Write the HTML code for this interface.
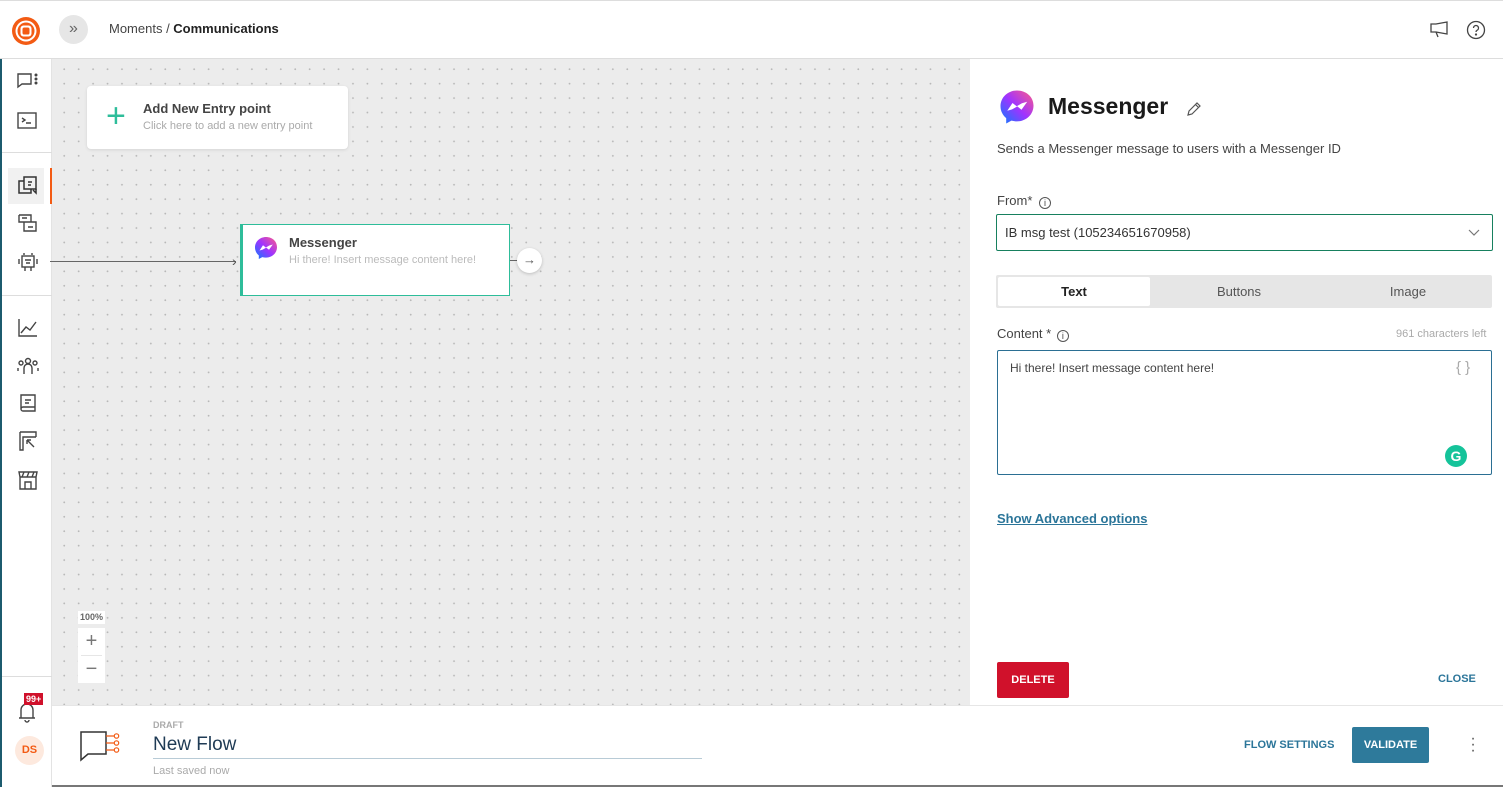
<!DOCTYPE html>
<html><head><meta charset="utf-8"><style>
*{box-sizing:border-box;margin:0;padding:0}
body{width:1503px;height:787px;overflow:hidden;font-family:"Liberation Sans",sans-serif;background:#fff;position:relative;color:#222}
.abs{position:absolute}
.top{left:0;top:0;width:1503px;height:59px;border-bottom:1px solid #ddd;border-top:1px solid #ddd;background:#fff}
.side{left:0;top:59px;width:52px;height:728px;border-left:2px solid #1c5b6e;border-right:1px solid #e3e3e3;background:#fff}
.canvas{left:52px;top:59px;width:918px;height:646px;background-color:#ececec;background-image:radial-gradient(circle,#b8b8b8 0.8px,transparent 1.1px);background-size:14.45px 14.45px;background-position:5px 3px}
.panel{left:970px;top:59px;width:533px;height:646px;background:#fff}
.bottom{left:52px;top:705px;width:1451px;height:82px;background:#fff;border-top:1px solid #e6e6e6;border-bottom:2px solid #777}
.ic{position:absolute;left:14px}
</style></head><body>
<div class="abs top">
 <svg class="abs" style="left:11px;top:15px" width="30" height="30" viewBox="0 0 30 30"><circle cx="15" cy="15" r="14" fill="#f35b14"/><circle cx="15" cy="15" r="10.5" fill="#fff"/><circle cx="15" cy="15" r="8.5" fill="#f35b14"/><rect x="9.5" y="9.5" width="11" height="11" rx="3" fill="#fff"/><rect x="11.5" y="11.5" width="7" height="7" rx="1.8" fill="#f35b14"/></svg>
 <div class="abs" style="left:59px;top:14px;width:29px;height:29px;border-radius:50%;background:#e6e6e6;text-align:center;line-height:28px;color:#666;font-size:16px">»</div>
 <div class="abs" style="left:109px;top:20px;font-size:13px;color:#444">Moments / <b style="color:#222;font-weight:600">Communications</b></div>
 <svg class="abs" style="left:1429px;top:20px" width="22" height="18" viewBox="0 0 22 18" fill="none" stroke="#444" stroke-width="1.3"><path d="M2 3h5l11-2v12l-11-2H2z M7 11l2 5"/></svg>
 <svg class="abs" style="left:1466px;top:19px" width="20" height="20" viewBox="0 0 20 20" fill="none" stroke="#444" stroke-width="1.3"><circle cx="10" cy="10" r="8.5"/><path d="M7.5 8a2.5 2.5 0 1 1 3.5 2.3c-.8.4-1 .9-1 1.7"/><circle cx="10" cy="14.5" r=".5" fill="#444"/></svg>
</div>
<div class="abs side">
 <svg class="ic" style="top:12px" width="24" height="20" viewBox="0 0 24 20" fill="none" stroke="#444" stroke-width="1.4"><path d="M2 3h13v10H6l-4 3z"/><circle cx="20" cy="4" r=".8" fill="#444"/><circle cx="20" cy="8" r=".8" fill="#444"/><circle cx="20" cy="12" r=".8" fill="#444"/></svg>
 <svg class="ic" style="top:52px" width="24" height="20" viewBox="0 0 24 20" fill="none" stroke="#444" stroke-width="1.4"><rect x="2" y="2" width="18" height="15"/><path d="M6 7l3 2-3 2M10 12h5"/></svg>
 <div class="abs" style="left:0;top:93px;width:50px;border-top:1px solid #ddd"></div>
 <div class="abs" style="left:6px;top:109px;width:36px;height:36px;background:#f1f1f1"></div>
 <div class="abs" style="left:48px;top:109px;width:2px;height:36px;background:#f35b14"></div>
 <svg class="ic" style="top:116px" width="24" height="22" viewBox="0 0 24 22" fill="none" stroke="#333" stroke-width="1.5"><rect x="8" y="2" width="12" height="12"/><path d="M8 6H3v12h12v-4M12 7h4M12 10h3M20 14v4l-3-3"/></svg>
 <svg class="ic" style="top:153px" width="24" height="22" viewBox="0 0 24 22" fill="none" stroke="#444" stroke-width="1.4"><path d="M3 3h12v7M3 3v7h5M8 10h12v9H8zM12 15h5M6 6h5"/></svg>
 <svg class="ic" style="top:191px" width="24" height="24" viewBox="0 0 24 24" fill="none" stroke="#444" stroke-width="1.4"><rect x="6" y="6" width="12" height="11"/><path d="M8 3v2M16 3v2M3 9v5M21 9v5M9 17v4M15 17v4M9 10h6M10 13h4"/></svg>
 <div class="abs" style="left:0;top:236px;width:50px;border-top:1px solid #ddd"></div>
 <svg class="ic" style="top:258px" width="24" height="22" viewBox="0 0 24 22" fill="none" stroke="#444" stroke-width="1.4"><path d="M3 2v17h18M5 16l5-6 4 3 6-8"/></svg>
 <svg class="ic" style="top:296px" width="24" height="22" viewBox="0 0 24 22" fill="none" stroke="#444" stroke-width="1.4"><circle cx="12" cy="6" r="2.5"/><circle cx="5" cy="8" r="2"/><circle cx="19" cy="8" r="2"/><path d="M8 19v-6a4 4 0 0 1 8 0v6M2 16v-3M22 16v-3"/></svg>
 <svg class="ic" style="top:334px" width="24" height="22" viewBox="0 0 24 22" fill="none" stroke="#444" stroke-width="1.4"><path d="M5 2h14v16H7a2 2 0 0 1-2-2zM5 16a2 2 0 0 1 2-2h12M9 7h6M9 10h4"/></svg>
 <svg class="ic" style="top:370px" width="24" height="24" viewBox="0 0 24 24" fill="none" stroke="#444" stroke-width="1.4"><path d="M4 3h16v5M4 3v18h3V8h13M11 11l7 7M11 11v4M11 11h4"/></svg>
 <svg class="ic" style="top:410px" width="24" height="22" viewBox="0 0 24 22" fill="none" stroke="#444" stroke-width="1.4"><path d="M3 3h18l-1 5H4zM4 8v12h16V8M9 20v-7h6v7M8 3l-2 5M13 3l-2 5M18 3l-2 5"/></svg>
 <div class="abs" style="left:0;top:617px;width:50px;border-top:1px solid #ddd"></div>
 <svg class="abs" style="left:15px;top:642px" width="22" height="22" viewBox="0 0 22 22" fill="none" stroke="#444" stroke-width="1.4"><path d="M4 17V9a6 6 0 0 1 12 0v8zM2 17h16M8 19a2 2 0 0 0 4 0"/></svg>
 <div class="abs" style="left:22px;top:634px;background:#d0112b;color:#fff;font-size:9px;font-weight:bold;padding:0 2px;line-height:12px">99+</div>
 <div class="abs" style="left:13px;top:677px;width:29px;height:29px;border-radius:50%;background:#fde9de;color:#f35b14;font-size:11px;font-weight:bold;text-align:center;line-height:29px">DS</div>
</div>
<div class="abs canvas">
 <div class="abs" style="left:35px;top:27px;width:261px;height:63px;background:#fff;border-radius:4px;box-shadow:0 1px 3px rgba(0,0,0,.1)">
  <div class="abs" style="left:19px;top:8px;color:#2ebd9a;font-size:34px;font-weight:200;line-height:44px">+</div>
  <div class="abs" style="left:56px;top:15px;font-size:13px;font-weight:bold;color:#444">Add New Entry point</div>
  <div class="abs" style="left:56px;top:34px;font-size:11px;color:#aaa">Click here to add a new entry point</div>
 </div>
 <div class="abs" style="left:-2px;top:202px;width:186px;border-top:1px solid #666"></div>
 <div class="abs" style="left:180px;top:194px;font-size:14px;color:#555">›</div>
 <div class="abs" style="left:188px;top:165px;width:270px;height:72px;background:#fff;border:1px solid #2ebd9a;border-left:3px solid #2ebd9a">
  <svg class="abs" style="left:11px;top:11px" width="24" height="24" viewBox="0 0 24 24"><defs><linearGradient id="g1" x1="0" y1="1" x2="1" y2="0"><stop offset="0" stop-color="#0a7cff"/><stop offset=".5" stop-color="#a033ff"/><stop offset="1" stop-color="#ff5c87"/></linearGradient></defs><path d="M12 1C6 1 1 5.5 1 11.5c0 3.2 1.5 6 3.8 7.9V23l3.5-1.9c1.2.3 2.4.5 3.7.5 6 0 11-4.5 11-10.5S18 1 12 1z" fill="url(#g1)"/><path d="M5.5 14.5l3.5-5.2 2.8 2.2 3.5-2 3.5-1-3.8 5.3-2.8-2.2-3.5 2z" fill="#fff"/></svg>
  <div class="abs" style="left:46px;top:10px;font-size:13px;font-weight:bold;color:#444">Messenger</div>
  <div class="abs" style="left:46px;top:29px;font-size:11px;color:#bbb">Hi there! Insert message content here!</div>
 </div>
 <div class="abs" style="left:458px;top:201px;width:8px;border-top:1px solid #666"></div>
 <div class="abs" style="left:465px;top:189px;width:25px;height:25px;border-radius:50%;background:#fff;box-shadow:0 1px 3px rgba(0,0,0,.2);text-align:center;line-height:24px;font-size:13px;color:#555">→</div>
 <div class="abs" style="left:26px;top:552px;width:27px;height:13px;background:#fff;font-size:9px;font-weight:bold;color:#666;text-align:center;line-height:13px">100%</div>
 <div class="abs" style="left:26px;top:569px;width:27px;height:55px;background:#fff;color:#777;text-align:center">
  <div style="font-size:20px;line-height:27px;border-bottom:1px solid #e6e6e6;margin:0 3px">+</div><div style="font-size:20px;line-height:26px">−</div>
 </div>
</div>
<div class="abs panel">
 <svg class="abs" style="left:29px;top:30px" width="36" height="36" viewBox="0 0 24 24"><defs><linearGradient id="g2" x1="0" y1="1" x2="1" y2="0"><stop offset="0" stop-color="#0a7cff"/><stop offset=".5" stop-color="#a033ff"/><stop offset="1" stop-color="#ff5c87"/></linearGradient></defs><path d="M12 1C6 1 1 5.5 1 11.5c0 3.2 1.5 6 3.8 7.9V23l3.5-1.9c1.2.3 2.4.5 3.7.5 6 0 11-4.5 11-10.5S18 1 12 1z" fill="url(#g2)"/><path d="M5.5 14.5l3.5-5.2 2.8 2.2 3.5-2 3.5-1-3.8 5.3-2.8-2.2-3.5 2z" fill="#fff"/></svg>
 <div class="abs" style="left:78px;top:34px;font-size:23px;font-weight:bold;color:#1a1a1a">Messenger</div>
 <svg class="abs" style="left:216px;top:42px" width="16" height="16" viewBox="0 0 16 16" fill="none" stroke="#555" stroke-width="1.2"><path d="M2 14l1-4 8-8 3 3-8 8zM9.5 3.5l3 3"/></svg>
 <div class="abs" style="left:27px;top:82px;font-size:13px;color:#444">Sends a Messenger message to users with a Messenger ID</div>
 <div class="abs" style="left:27px;top:134px;font-size:13px;color:#444">From* <span style="display:inline-block;width:12px;height:12px;border:1px solid #555;border-radius:50%;font-size:9px;text-align:center;line-height:10px;vertical-align:-1px;margin-left:3px">i</span></div>
 <div class="abs" style="left:26px;top:155px;width:497px;height:37px;border:1px solid #17805e;border-radius:2px">
  <div class="abs" style="left:8px;top:10px;font-size:13px;color:#333">IB msg test (105234651670958)</div>
  <svg class="abs" style="left:471px;top:14px" width="12" height="8" viewBox="0 0 12 8" fill="none" stroke="#777" stroke-width="1.2"><path d="M1 1l5 5 5-5"/></svg>
 </div>
 <div class="abs" style="left:26px;top:216px;width:496px;height:33px;background:#e6e6e6;border-radius:2px">
  <div class="abs" style="left:2px;top:2px;width:152px;height:29px;background:#fff;border-radius:2px;text-align:center;line-height:29px;font-size:13px;font-weight:bold;color:#222">Text</div>
  <div class="abs" style="left:167px;top:2px;width:152px;text-align:center;line-height:29px;font-size:13px;color:#555">Buttons</div>
  <div class="abs" style="left:336px;top:2px;width:152px;text-align:center;line-height:29px;font-size:13px;color:#555">Image</div>
 </div>
 <div class="abs" style="left:27px;top:267px;font-size:13px;color:#444">Content * <span style="display:inline-block;width:12px;height:12px;border:1px solid #555;border-radius:50%;font-size:9px;text-align:center;line-height:10px;vertical-align:-1px;margin-left:2px">i</span></div>
 <div class="abs" style="left:426px;top:269px;font-size:11px;color:#aaa">961 characters left</div>
 <div class="abs" style="left:27px;top:291px;width:495px;height:125px;border:1px solid #2b6f93;border-radius:2px">
  <div class="abs" style="left:12px;top:10px;font-size:12px;color:#444">Hi there! Insert message content here!</div>
  <div class="abs" style="left:458px;top:8px;font-size:15px;color:#aaa">{ }</div>
  <div class="abs" style="left:447px;top:94px;width:22px;height:22px;border-radius:50%;background:#15c39a;color:#fff;font-size:14px;font-weight:bold;text-align:center;line-height:22px">G</div>
 </div>
 <div class="abs" style="left:27px;top:452px;font-size:13px;font-weight:bold;color:#2b7599;text-decoration:underline">Show Advanced options</div>
 <div class="abs" style="left:27px;top:603px;width:72px;height:36px;background:#d0112b;color:#fff;font-size:11px;font-weight:bold;text-align:center;line-height:36px;border-radius:2px">DELETE</div>
 <div class="abs" style="left:468px;top:614px;font-size:11px;font-weight:bold;color:#2b7599">CLOSE</div>
</div>
<div class="abs bottom">
 <svg class="abs" style="left:26px;top:22px" width="46" height="38" viewBox="0 0 46 38" fill="none"><path d="M3 4h25v22H10l-7 6z" stroke="#333" stroke-width="1.5"/><path d="M28 8h8M28 15h8M28 22h8" stroke="#f35b14" stroke-width="1.3"/><circle cx="38.5" cy="8" r="2.2" stroke="#f35b14" stroke-width="1.2"/><circle cx="38.5" cy="15" r="2.2" stroke="#f35b14" stroke-width="1.2"/><circle cx="38.5" cy="22" r="2.2" stroke="#f35b14" stroke-width="1.2"/></svg>
 <div class="abs" style="left:101px;top:14px;font-size:9px;font-weight:bold;color:#aaa">DRAFT</div>
 <div class="abs" style="left:101px;top:28px;width:549px;height:25px;border-bottom:1px solid #b8cbd6;font-size:19px;color:#1f3b55">New Flow</div>
 <div class="abs" style="left:101px;top:59px;font-size:11px;color:#aaa">Last saved now</div>
 <div class="abs" style="left:1192px;top:33px;font-size:11px;font-weight:bold;color:#2b7599">FLOW SETTINGS</div>
 <div class="abs" style="left:1300px;top:21px;width:77px;height:36px;background:#2e7a9b;border-radius:2px;color:#fff;font-size:11px;font-weight:bold;text-align:center;line-height:36px">VALIDATE</div>
 <div class="abs" style="left:1418px;top:30px;font-size:16px;color:#555;line-height:6px;width:6px;text-align:center">·<br>·<br>·</div>
</div>
</body></html>
